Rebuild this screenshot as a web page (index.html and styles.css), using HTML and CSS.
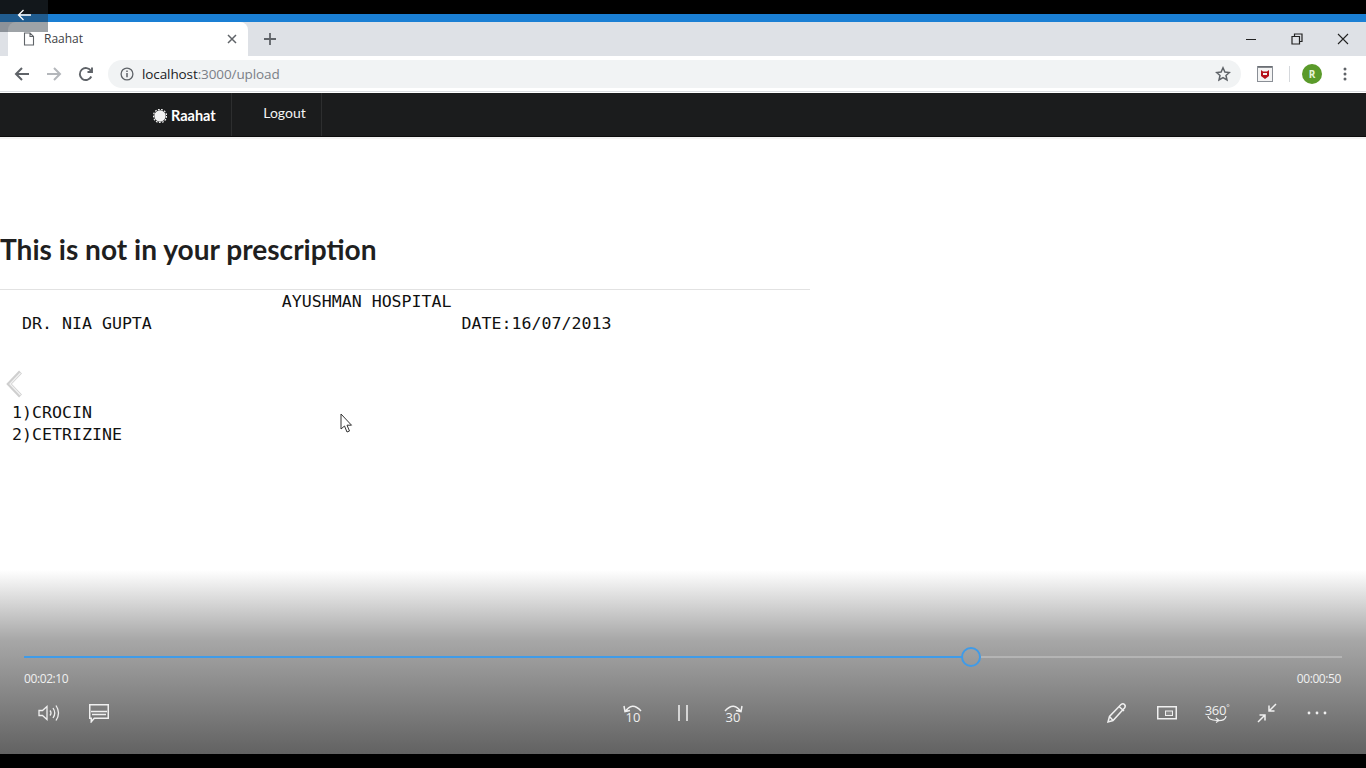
FILE: index.html
```html
<!DOCTYPE html>
<html lang="en">
<head>
<meta charset="utf-8">
<title>Raahat</title>
<link rel="stylesheet" href="styles.css">
</head>
<body>
<div class="letterbox-top"></div>
<div class="frame">
  <div class="accent"></div>
  <div class="tabstrip">
    <div class="tab">
      <svg class="tab-file" width="12" height="14" viewBox="0 0 12 14"><path d="M1.5 1h5.500l3.500 3.500v8.500h-9z M7 1v3.500h3.500" fill="none" stroke="#5f6368" stroke-width="1.100"/></svg>
      <span class="tab-title">Raahat</span>
      <svg class="tab-close" width="10" height="10" viewBox="0 0 10 10"><path d="M1 1l8 8M9 1l-8 8" stroke="#5f6368" stroke-width="1.500"/></svg>
    </div>
    <svg class="tab-new" width="14" height="14" viewBox="0 0 14 14"><path d="M7 1v12M1 7h12" stroke="#5f6368" stroke-width="1.800"/></svg>
    <div class="win-controls">
      <svg class="win-min" width="10" height="10" viewBox="0 0 10 10"><path d="M0 5.500h10" stroke="#222" stroke-width="1"/></svg>
      <svg width="12" height="12" viewBox="0 0 12 12"><path d="M1 3.500h7.500v7.500h-7.500z M3.500 3.500v-2.500h7.500v7.500h-2.500" fill="none" stroke="#222" stroke-width="1.200"/></svg>
      <svg width="12" height="12" viewBox="0 0 12 12"><path d="M1 1l10 10M11 1l-10 10" stroke="#222" stroke-width="1.100"/></svg>
    </div>
  </div>
  <div class="toolbar">
    <svg class="nav-ico" width="16" height="16" viewBox="0 0 16 16"><path d="M15 8h-13M8 2l-6 6 6 6" fill="none" stroke="#5f6368" stroke-width="2"/></svg>
    <svg class="nav-ico" width="16" height="16" viewBox="0 0 16 16"><path d="M1 8h13M8 2l6 6-6 6" fill="none" stroke="#b4b7bb" stroke-width="2"/></svg>
    <svg class="nav-ico" width="16" height="16" viewBox="0 0 16 16"><path d="M13.300 10.500a6 6 0 1 1-.3-5.500M14 1.500v4.500h-4.500" fill="none" stroke="#5f6368" stroke-width="1.900"/></svg>
    <div class="omnibox">
      <svg width="14" height="14" viewBox="0 0 14 14"><circle cx="7" cy="7" r="5.900" fill="none" stroke="#5f6368" stroke-width="1.300"/><path d="M7 6v4.200M7 3.400v1.500" stroke="#5f6368" stroke-width="1.500"/></svg>
      <span class="url"><span class="url-host">localhost</span>:3000/upload</span>
      <svg class="star" width="16" height="16" viewBox="0 0 16 16"><path d="M8 1.800l1.900 4.200 4.500.5-3.400 3 1 4.500-4-2.300-4 2.300 1-4.500-3.400-3 4.500-.5z" fill="none" stroke="#5f6368" stroke-width="1.500"/></svg>
    </div>
    <div class="ext">
      <svg width="16" height="16" viewBox="0 0 16 16"><rect x=".5" y=".5" width="15" height="15" fill="#f4f4f4" stroke="#8a8f96"/><path d="M1 1h14" stroke="#5f6368" stroke-width="1.500"/><path d="M4 4l2 1.500h4l2-1.500v6l-4 3-4-3z" fill="#b5121b"/><path d="M6 7h4v2h-4z" fill="#f4f4f4"/></svg>
    </div>
    <div class="divider"></div>
    <div class="avatar">R</div>
    <svg class="kebab" width="4" height="14" viewBox="0 0 4 14"><circle cx="2" cy="2" r="1.500" fill="#5f6368"/><circle cx="2" cy="7" r="1.500" fill="#5f6368"/><circle cx="2" cy="12" r="1.500" fill="#5f6368"/></svg>
  </div>
  <nav class="navbar">
    <div class="brand">
      <svg width="14" height="14" viewBox="0 0 14 14"><circle cx="7" cy="7" r="5.700" fill="#f2f2f2"/><circle cx="7" cy="7" r="6.600" fill="none" stroke="#f2f2f2" stroke-width="1.200" stroke-dasharray="1.800 1.400"/></svg>
      <span>Raahat</span>
    </div>
    <a class="nav-link">Logout</a>
  </nav>
  <main class="content">
    <h1>This is not in your prescription</h1>
    <hr class="rule">
    <pre class="rx">                            AYUSHMAN HOSPITAL
  DR. NIA GUPTA                               DATE:16/07/2013



 1)CROCIN
 2)CETRIZINE</pre>
  </main>
</div>
<div class="letterbox-bottom"></div>

<div class="back-btn">
  <svg width="14" height="12" viewBox="0 0 14 12"><path d="M14 6h-12.500M6.500 1l-5 5 5 5" fill="none" stroke="#fff" stroke-width="1.300"/></svg>
</div>
<svg class="prev-chevron" width="18" height="28" viewBox="0 0 18 28"><path d="M15.500 2l-11.500 12 11.500 12" fill="none" stroke="#cfcfcf" stroke-width="4"/><path d="M15.500 3l-10.500 11 10.500 11" fill="none" stroke="#f2f2f2" stroke-width="1.200"/></svg>
<svg class="cursor" width="14" height="20" viewBox="0 0 14 20"><path d="M1 1v15l3.500-3 2.500 6 2.500-1-2.500-5.800h4.500z" fill="#fff" stroke="#333" stroke-width="1"/></svg>

<div class="player">
  <div class="track">
    <div class="track-done"></div>
    <div class="thumb"></div>
    <div class="track-rest"></div>
  </div>
  <div class="times"><span>00:02:10</span><span>00:00:50</span></div>
  <div class="controls">
    <div class="group">
      <button class="ctl"><svg width="22" height="18" viewBox="0 0 22 18"><path d="M1 6.500h3.500l4.500-4v13l-4.500-4h-3.500z M12 6.500q2 2.500 0 5M15 4q3.500 5 0 10M18 1.500q5 7.500 0 15" fill="none" stroke="#f0f0f0" stroke-width="1.300"/></svg></button>
      <button class="ctl"><svg width="20" height="19" viewBox="0 0 20 19"><path d="M.75 .75h18.500v13.500h-14l-3 3.500v-3.500h-1.500z" fill="none" stroke="#f0f0f0" stroke-width="1.500"/><path d="M2 7.500h16M3 10.500h14" stroke="#f0f0f0" stroke-width="1.300"/></svg></button>
    </div>
    <div class="group">
      <button class="ctl seek"><svg width="22" height="10" viewBox="0 0 22 10"><path d="M3 9q7-11 16-1M2 3l1 5.500 5-1" fill="none" stroke="#f0f0f0" stroke-width="1.500"/></svg><span class="seek-num">10</span></button>
      <button class="ctl"><svg width="12" height="16" viewBox="0 0 12 16"><path d="M2 0v16M10 0v16" stroke="#e6e6e6" stroke-width="1.700"/></svg></button>
      <button class="ctl seek"><svg width="22" height="10" viewBox="0 0 22 10"><path d="M19 9q-7-11-16-1M20 3l-1 5.500-5-1" fill="none" stroke="#f0f0f0" stroke-width="1.500"/></svg><span class="seek-num">30</span></button>
    </div>
    <div class="group group-end">
      <button class="ctl"><svg width="22" height="22" viewBox="0 0 22 22"><path d="M2 20l1.500-5.500 11.500-12q2-1.500 3.500 0t0 3.500l-11.500 12.500zM13 4.500l5 4.500M3.500 14.500l4 4.500" fill="none" stroke="#f0f0f0" stroke-width="1.500"/></svg></button>
      <button class="ctl"><svg width="20" height="14" viewBox="0 0 20 14"><rect x=".75" y=".75" width="18.500" height="12" fill="none" stroke="#f0f0f0" stroke-width="1.500"/><rect x="8.500" y="5" width="7" height="4.500" fill="#8c8c8c" stroke="#f0f0f0" stroke-width="1"/></svg></button>
      <button class="ctl v360"><span class="deg">360<sup>°</sup></span><svg width="20" height="7" viewBox="0 0 20 7"><path d="M1 0q0 4 9 4.500t9-4.500M9 2l3 2.500-3 2" fill="none" stroke="#f0f0f0" stroke-width="1.200"/></svg></button>
      <button class="ctl"><svg width="20" height="20" viewBox="0 0 20 20"><path d="M1 19l7-7M2.500 12h5.500v5.500M19 1l-7 7M17.500 8h-5.500v-5.500" fill="none" stroke="#f0f0f0" stroke-width="1.500"/></svg></button>
      <button class="ctl"><svg width="20" height="4" viewBox="0 0 20 4"><circle cx="2" cy="2" r="1.400" fill="#f0f0f0"/><circle cx="10" cy="2" r="1.400" fill="#f0f0f0"/><circle cx="18" cy="2" r="1.400" fill="#f0f0f0"/></svg></button>
    </div>
  </div>
</div>
</body>
</html>
```
FILE: styles.css
```css
* { box-sizing: border-box; }
html, body { margin: 0; height: 768px; overflow: hidden; }
body { position: relative; display: flex; flex-direction: column; background: #000; font-family: "Lato", sans-serif; }

.letterbox-top { height: 14px; background: #000; flex: none; }
.letterbox-bottom { height: 14px; background: #000; flex: none; }
.frame { flex: 1; display: flex; flex-direction: column; background: #fff; min-height: 0; }

.accent { height: 8px; background: #1a7fd4; flex: none; }

.tabstrip { height: 34px; flex: none; background: #dee1e6; display: flex; align-items: center; }
.tab { width: 240px; height: 34px; margin-left: 8px; background: #fff; border-radius: 8px 8px 0 0; display: flex; align-items: center; padding: 0 11px 0 15px; }
.tab-file { flex: none; }
.tab-title { margin-left: 9px; padding-bottom: 2px; font: 12px "Open Sans", sans-serif; color: #3c4043; flex: 1; }
.tab-new { margin-left: 15px; }
.win-controls { margin-left: auto; display: flex; align-items: center; gap: 34px; padding-right: 17px; }
.win-min { margin-right: 1px; }

.toolbar { height: 36px; flex: none; background: #fff; display: flex; align-items: center; padding-left: 14px; border-bottom: 1px solid #dadce0; }
.nav-ico { margin-right: 16px; flex: none; }
.omnibox { width: 1133px; height: 28px; margin-left: -2px; border-radius: 14px; background: #f1f3f4; display: flex; align-items: center; padding: 0 10px 0 12px; flex: none; }
.url { margin-left: 8px; padding-top: 1px; font: 13.5px "Open Sans", sans-serif; color: #7b8087; letter-spacing: -.1px; }
.url-host { color: #202124; }
.star { margin-left: auto; }
.ext { margin-left: 16px; width: 16px; height: 16px; display: flex; }
.divider { width: 1px; height: 16px; background: #d5d8dc; margin-left: 16px; }
.avatar { width: 20px; height: 20px; margin-left: 12px; border-radius: 50%; background: #5a9a2a; color: #e6f2d8; font: 700 10px/20px "Open Sans", sans-serif; text-align: center; }
.kebab { margin-left: 21px; }

.navbar { height: 44px; flex: none; margin-top: 1px; background: #1b1c1d; border-bottom: 1px solid #0c0c0c; display: flex; align-items: stretch; padding-left: 153px; color: #fff; }
.brand { display: flex; align-items: center; gap: 4px; width: 79px; font-weight: 700; font-size: 14.5px; border-right: 1px solid #2d2e2f; padding-top: 2px; }
.nav-link { width: 90px; display: flex; align-items: center; justify-content: center; font-size: 14px; border-right: 1px solid #2d2e2f; padding: 0 0 4px 16px; color: #f4f4f4; }

.content { flex: 1; border-top: 2px solid #f3f3f3; padding-top: 93px; min-height: 0; }
h1 { margin: 0; font-size: 28.1px; line-height: 34px; font-weight: 700; color: #1f1f1f; }
.rule { width: 810px; height: 1px; margin: 23px 0 0; border: 0; background: #e2e2e2; }
.rx { margin: 0; padding: 1px 0 0 2px; font: 16.6px/22.2px "DejaVu Sans Mono", monospace; color: #111; }

.back-btn { position: absolute; left: 0; top: 0; width: 48px; height: 32px; padding: 9px 0 0 17px; background: rgba(40, 50, 60, .45); line-height: 0; }
.prev-chevron { position: absolute; left: 5px; top: 370px; }
.cursor { position: absolute; left: 340px; top: 413px; }

.player { position: absolute; left: 0; right: 0; bottom: 14px; height: 184px; padding: 82px 24px 0; background: linear-gradient(to bottom, rgba(95,95,95,0) 0%, rgba(95,95,95,.55) 38%, rgba(98,98,98,1) 100%); color: #f0f0f0; }
.track { display: flex; align-items: center; height: 10px; }
.track-done { width: 938px; height: 2px; background: #3f9be8; }
.thumb { width: 20px; height: 20px; margin: 0 -1px; border: 2px solid #3f9be8; border-radius: 50%; flex: none; position: relative; }
.track-rest { flex: 1; height: 2px; background: #b4b4b4; margin-left: 1px; }
.times { display: flex; justify-content: space-between; margin-top: 8px; padding-right: 1px; font: 12px/18px "Open Sans", sans-serif; letter-spacing: -.4px; }
.controls { display: grid; grid-template-columns: 1fr auto 1fr; align-items: center; margin-top: 0; }
.group { display: flex; }
.group-end { justify-content: flex-end; }
.ctl { width: 50px; height: 50px; border: 0; padding: 0; background: none; color: #f0f0f0; display: flex; flex-direction: column; align-items: center; justify-content: center; }
.seek-num { font: 13px/12px "Open Sans", sans-serif; margin-top: -2px; }
.deg { font: 13px/12px "Open Sans", sans-serif; letter-spacing: -.3px; }
.deg sup { font-size: 8px; line-height: 0; }
```
